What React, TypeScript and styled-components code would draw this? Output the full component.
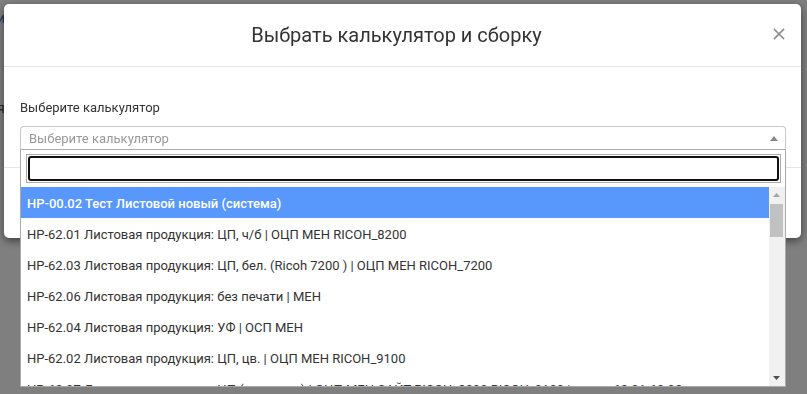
import React from "react";
import styled, { createGlobalStyle } from "styled-components";

const GlobalStyle = createGlobalStyle`
  html, body { margin: 0; padding: 0; height: 100%; }
  body { font-family: Roboto, "Noto Sans", sans-serif; background: #fff; overflow: hidden; }
  * { box-sizing: border-box; }
`;

const Page = styled.div`
  position: relative;
  height: 394px;
  padding-top: 8px;
  color: #333;
  font-size: 14px;
`;

const PageLine = styled.div<{ $top: number; $color: string }>`
  margin-top: ${(p) => p.$top}px;
  margin-left: -3px;
  color: ${(p) => p.$color};
  line-height: 20px;
`;

const Overlay = styled.div`
  position: fixed;
  inset: 0;
  background: rgba(0, 0, 0, 0.5);
  padding: 4px 6px 0 4px;
`;

const Modal = styled.div`
  background: #fff;
  border-radius: 5px;
  box-shadow: 0 3px 9px rgba(0, 0, 0, 0.5);
`;

const Header = styled.div`
  height: 63px;
  border-bottom: 1px solid #e5e5e5;
  display: flex;
  align-items: center;
  justify-content: center;
  position: relative;
  padding-right: 12px;
`;

const Title = styled.h4`
  margin: 0;
  font-size: 20px;
  font-weight: 400;
  color: #333;
  line-height: 24px;
`;

const Close = styled.button`
  position: absolute;
  right: 16px;
  top: 24px;
  width: 12px;
  height: 12px;
  padding: 0;
  border: 0;
  background: none;
  display: flex;
`;

const Body = styled.div`
  height: 100px;
  padding: 31px 15px 0 16px;
`;

const Label = styled.label`
  display: block;
  font-size: 13px;
  line-height: 20px;
  color: #333;
  margin-bottom: 8px;
`;

const SelectWrap = styled.div`
  position: relative;
`;

const SelectBox = styled.div`
  height: 24px;
  border: 1px solid #c9c9c9;
  border-radius: 4px 4px 0 0;
  border-bottom-color: #aaa;
  display: flex;
  align-items: center;
  justify-content: space-between;
  padding: 0 7px 0 8px;
`;

const Placeholder = styled.span`
  color: #999;
  font-size: 13px;
`;

const Dropdown = styled.div`
  position: absolute;
  top: 100%;
  left: 0;
  right: 0;
  background: #fff;
  border: 1px solid #aaa;
  border-top: none;
  z-index: 10;
`;

const SearchRow = styled.div`
  padding: 4px 4px 4px 5px;
`;

const SearchBox = styled.div`
  border: 1px solid #aaa;
  padding: 1px;
`;

const SearchInput = styled.input`
  display: block;
  width: 100%;
  height: 25px;
  border: 2px solid #101010;
  border-radius: 3px;
  outline: none;
  font-family: inherit;
  font-size: 13px;
`;

const ListArea = styled.div`
  display: flex;
  height: 199px;
`;

const List = styled.ul`
  flex: 1;
  min-width: 0;
  list-style: none;
  margin: 0;
  padding: 0;
  overflow: hidden;
`;

const Option = styled.li<{ $active?: boolean }>`
  padding: 7px 6px 5px;
  line-height: 19px;
  font-size: 13px;
  white-space: nowrap;
  color: ${(p) => (p.$active ? "#fff" : "#333")};
  background: ${(p) => (p.$active ? "#5897fb" : "#fff")};
  font-weight: ${(p) => (p.$active ? 500 : 400)};
`;

const ScrollBar = styled.div`
  width: 16px;
  flex: none;
  background: #f1f1f1;
  display: flex;
  flex-direction: column;
`;

const ScrollButton = styled.div`
  height: 16px;
  display: flex;
  align-items: center;
  justify-content: center;
  padding-right: 1px;
`;

const ScrollTrack = styled.div`
  flex: 1;
  padding: 1px 2px 0 1px;
`;

const Thumb = styled.div`
  height: 33px;
  background: #c1c1c1;
`;

const Footer = styled.div`
  height: 71px;
  border-top: 1px solid #e5e5e5;
`;

const items = [
  "НР-00.02 Тест Листовой новый (система)",
  "НР-62.01 Листовая продукция: ЦП, ч/б | ОЦП МЕН RICOH_8200",
  "НР-62.03 Листовая продукция: ЦП, бел. (Ricoh 7200 ) | ОЦП МЕН RICOH_7200",
  "НР-62.06 Листовая продукция: без печати | МЕН",
  "НР-62.04 Листовая продукция: УФ | ОСП МЕН",
  "НР-62.02 Листовая продукция: ЦП, цв. | ОЦП МЕН RICOH_9100",
  "НР-62.07 Листовая продукция: ЦП (листовки) | ОЦП МЕН САЙТ RICOH_8200 RICOH_9100 | копия 62.01-62.02",
];

export default function App() {
  return (
    <>
      <GlobalStyle />
      <Page>
        <PageLine $top={0} $color="#337ab7">и</PageLine>
        <PageLine $top={70} $color="#555">я</PageLine>
      </Page>
      <Overlay>
        <Modal>
          <Header>
            <Title>Выбрать калькулятор и сборку</Title>
            <Close aria-label="Закрыть">
              <svg width="12" height="12" viewBox="0 0 12 12">
                <path d="M1.5 1.5 L10.5 10.5 M10.5 1.5 L1.5 10.5" stroke="#8a8a8a" strokeWidth="1.6" strokeLinecap="square" />
              </svg>
            </Close>
          </Header>
          <Body>
            <Label>Выберите калькулятор</Label>
            <SelectWrap>
              <SelectBox>
                <Placeholder>Выберите калькулятор</Placeholder>
                <svg width="8" height="5" viewBox="0 0 8 5">
                  <path d="M0 5 L4 0 L8 5 Z" fill="#888" />
                </svg>
              </SelectBox>
              <Dropdown>
                <SearchRow>
                  <SearchBox>
                    <SearchInput type="text" />
                  </SearchBox>
                </SearchRow>
                <ListArea>
                  <List>
                    {items.map((t, i) => (
                      <Option key={i} $active={i === 0}>
                        {t}
                      </Option>
                    ))}
                  </List>
                  <ScrollBar>
                    <ScrollButton>
                      <svg width="7" height="4" viewBox="0 0 7 4">
                        <path d="M0 4 L3.5 0 L7 4 Z" fill="#a3a3a3" />
                      </svg>
                    </ScrollButton>
                    <ScrollTrack>
                      <Thumb />
                    </ScrollTrack>
                    <ScrollButton>
                      <svg width="7" height="4" viewBox="0 0 7 4">
                        <path d="M0 0 L3.5 4 L7 0 Z" fill="#505050" />
                      </svg>
                    </ScrollButton>
                  </ScrollBar>
                </ListArea>
              </Dropdown>
            </SelectWrap>
          </Body>
          <Footer />
        </Modal>
      </Overlay>
    </>
  );
}
